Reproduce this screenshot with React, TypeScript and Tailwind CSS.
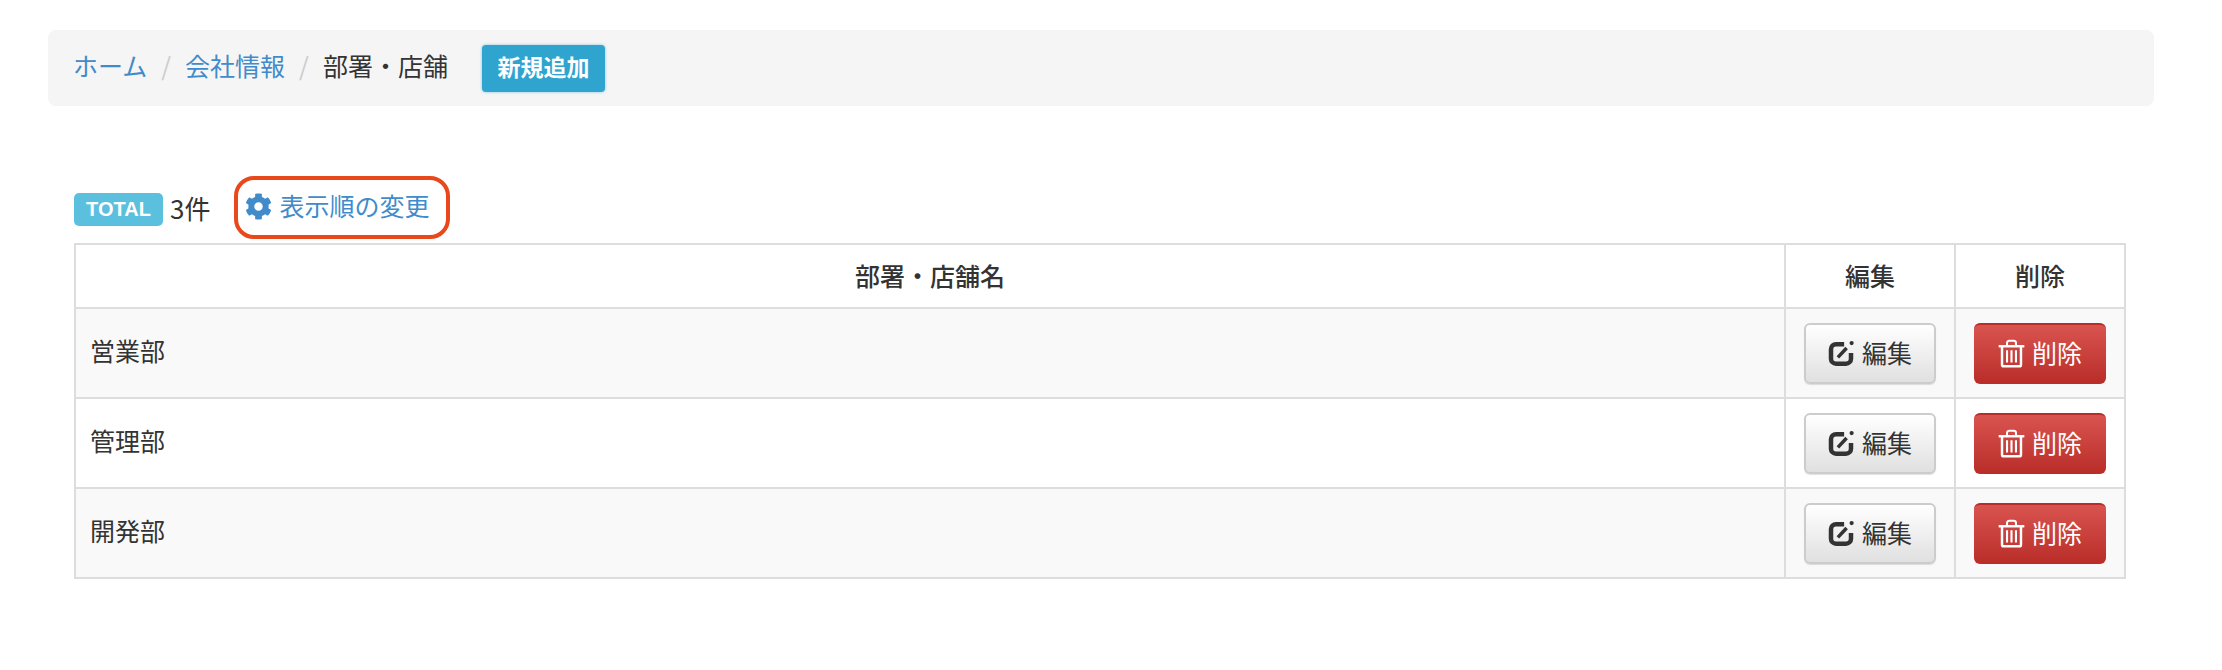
import { FaCog } from "react-icons/fa";

const rows = ["営業部", "管理部", "開発部"];

function EditIcon() {
  return (
    <svg viewBox="0 0 24 24" className="h-[30px] w-[30px]" fill="none" aria-hidden="true">
      <path
        d="M14.5 5H8A4 4 0 0 0 4 9v7.5a4 4 0 0 0 4 4h8a4 4 0 0 0 4-4V12"
        stroke="#333"
        strokeWidth="3.6"
      />
      <path d="M9.5 15.5l7-7.5" stroke="#333" strokeWidth="2.8" />
      <circle cx="20.5" cy="4" r="1.7" fill="#333" />
    </svg>
  );
}

function TrashIcon() {
  return (
    <svg viewBox="0 0 24 26" className="h-[29px] w-[27px]" fill="none" stroke="#fff" aria-hidden="true">
      <path d="M0.5 6.5h23" strokeWidth="2.2" />
      <path d="M8 6V3.5C8 2 9 1.5 10 1.5h4c1 0 2 .5 2 2V6" strokeWidth="1.8" />
      <path d="M3.5 7v16c0 1 .6 1.5 1.5 1.5h14c.9 0 1.5-.5 1.5-1.5V7" strokeWidth="2.2" />
      <path d="M8 10v11M12 10v11M16 10v11" strokeWidth="1.9" />
    </svg>
  );
}

export default function App() {
  return (
    <div className="h-[670px] bg-white pt-[30px] pl-[48px] font-['Noto_Sans_CJK_JP','Liberation_Sans',sans-serif] text-[25px] text-[#333]">
      {/* Breadcrumb */}
      <div className="flex h-[76px] w-[2106px] items-center gap-[34px] rounded-[8px] bg-[#f5f5f5] pl-[25px]">
        <div className="flex items-center gap-[14px] pb-[4px]">
          <a className="text-[#428bca]">ホーム</a>
          <span className="text-[#ccc]">/</span>
          <a className="text-[#428bca]">会社情報</a>
          <span className="text-[#ccc]">/</span>
          <span>部署・店舗</span>
        </div>
        <button className="h-[47px] w-[123px] rounded-[4px] bg-[#2fa4cf] pb-[3px] text-[23px] font-bold text-white shadow-[0_0_3px_rgba(47,164,207,0.6)]">
          新規追加
        </button>
      </div>

      <div className="ml-[26px] w-[2052px]">
        {/* Count and sort link */}
        <div className="mt-[70px] flex h-[62px] items-center">
          <span className="mt-[4px] flex h-[33px] w-[89px] items-center justify-center rounded-[5px] bg-[#5bc0de] font-['Liberation_Sans',sans-serif] text-[20px] font-bold text-white">
            TOTAL
          </span>
          <span className="ml-[7px] text-[26px]">3件</span>
          <a className="ml-[24px] flex h-[63px] w-[216px] items-center gap-[7px] rounded-[20px] border-4 border-[#e8481c] pb-[2px] pl-[7px] text-[#428bca]">
            <FaCog className="h-[27px] w-[27px]" />
            表示順の変更
          </a>
        </div>

        {/* Table */}
        <table className="mt-[5px] w-full table-fixed border-collapse">
          <thead>
            <tr className="h-[64px]">
              <th className="border-2 border-[#ddd] font-medium">部署・店舗名</th>
              <th className="w-[170px] border-2 border-[#ddd] font-medium">編集</th>
              <th className="w-[170px] border-2 border-[#ddd] font-medium">削除</th>
            </tr>
          </thead>
          <tbody>
            {rows.map((name, i) => (
              <tr key={name} className={i % 2 === 0 ? "h-[90px] bg-[#f9f9f9]" : "h-[90px] bg-white"}>
                <td className="border-2 border-[#ddd] pb-[4px] pl-[14px]">{name}</td>
                <td className="border-2 border-[#ddd]">
                  <button className="mx-auto flex h-[61px] w-[132px] items-center justify-center gap-[6px] rounded-[6px] border-2 border-[#ccc] bg-gradient-to-b from-white to-[#e0e0e0] pr-[2px] pb-[1px] shadow-[0_1px_1px_rgba(0,0,0,0.12)]">
                    <EditIcon />
                    編集
                  </button>
                </td>
                <td className="border-2 border-[#ddd]">
                  <button className="mx-auto flex h-[61px] w-[132px] items-center justify-center gap-[7px] rounded-[6px] border-t-2 border-t-[#b92c28] bg-gradient-to-b from-[#d9534f] to-[#b92c28] pb-[2px] text-white">
                    <TrashIcon />
                    削除
                  </button>
                </td>
              </tr>
            ))}
          </tbody>
        </table>
      </div>
    </div>
  );
}
